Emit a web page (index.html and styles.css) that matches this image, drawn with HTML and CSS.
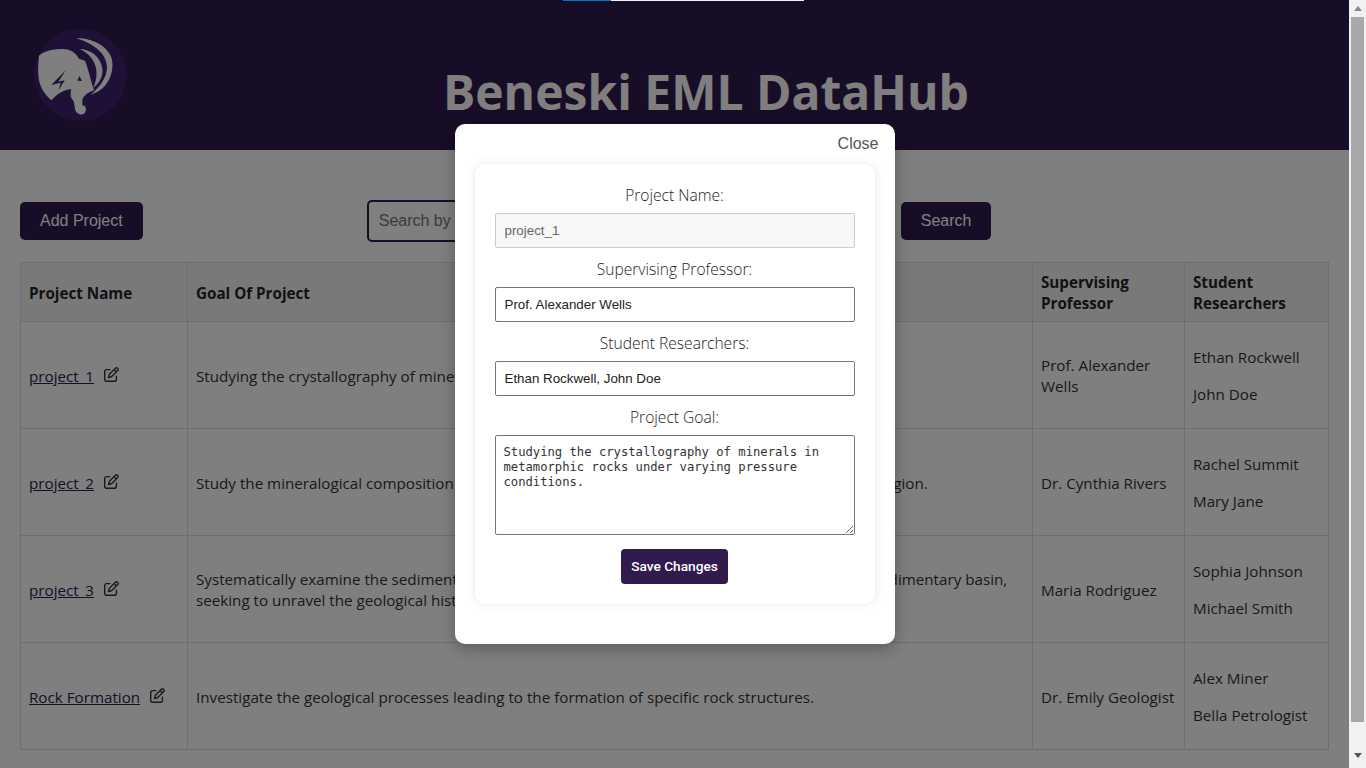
FILE: index.html
```html
<!DOCTYPE html>
<html lang="en">
<head>
    <meta charset="UTF-8">
    <meta name="viewport" content="width=device-width, initial-scale=1.0">
    <title>Beneski EML DataHub</title>
    <link rel="stylesheet" href="styles.css">
</head>
<body>
    <svg class="icon-defs" aria-hidden="true">
        <symbol id="icon-edit" viewBox="0 0 512 512">
            <path d="M441 58.9L453.1 71c9.4 9.4 9.4 24.6 0 33.9L424 134.1 377.9 88 407 58.9c9.4-9.4 24.6-9.4 33.9 0zM209.8 256.2L344 121.9 390.1 168 255.8 302.2c-2.9 2.9-6.5 5-10.4 6.1l-58.5 16.7 16.7-58.5c1.1-3.9 3.2-7.5 6.1-10.4zM373.1 25L175.8 222.2c-8.7 8.7-15 19.4-18.3 31.1l-28.6 100c-2.4 8.4-.1 17.4 6.1 23.6s15.2 8.5 23.6 6.1l100-28.6c11.8-3.4 22.5-9.7 31.1-18.3L487 138.9c28.1-28.1 28.1-73.7 0-101.8L474.9 25C446.8-3.1 401.2-3.1 373.1 25zM88 64C39.4 64 0 103.4 0 152V424c0 48.6 39.4 88 88 88H360c48.6 0 88-39.4 88-88V312c0-13.3-10.7-24-24-24s-24 10.7-24 24V424c0 22.1-17.9 40-40 40H88c-22.1 0-40-17.9-40-40V152c0-22.1 17.9-40 40-40H200c13.3 0 24-10.7 24-24s-10.7-24-24-24H88z"/>
        </symbol>
    </svg>

    <div class="window">
        <div class="page">
            <header class="site-header">
                <svg class="logo" viewBox="12 12 276 276" aria-label="Beneski logo">
                    <circle cx="151" cy="150" r="138" fill="#3e2070"/>
                    <path fill="#fff" d="M27 92C45 76 75 72 100 72C122 73 138 84 147 101L165 107C174 128 182 165 192 196C172 204 160 212 157 226L157 241C168 242 171 252 165 263C156 273 141 269 136 256C132 242 135 232 126 222C120 214 122 202 124 192C104 194 82 204 65 226C42 208 26 180 25 150C24 130 25 110 27 92Z"/>
                    <path fill="#3e2070" d="M107 136L64 180L92 173L86 196L104 166L85 170Z"/>
                    <path fill="#3e2070" d="M148 153L156 168L142 167Z"/>
                    <path fill="#fff" d="M138 40C185 38 232 62 245 100C256 148 228 198 182 209C205 190 231 160 231 125C229 85 190 55 138 40Z"/>
                    <path fill="#fff" d="M148 72C180 72 212 95 217 130C220 155 208 175 188 190C198 172 203 150 197 125C190 100 172 82 148 72Z"/>
                </svg>
                <h1>Beneski EML DataHub</h1>
            </header>

            <main class="content">
                <div class="toolbar">
                    <button class="btn">Add Project</button>
                    <div class="search">
                        <input class="search-input" type="text" placeholder="Search by project name, goal, professor or student">
                        <button class="btn search-btn">Search</button>
                    </div>
                </div>

                <table class="projects">
                    <colgroup>
                        <col class="col-name">
                        <col>
                        <col class="col-prof">
                        <col class="col-students">
                    </colgroup>
                    <thead>
                        <tr>
                            <th>Project Name</th>
                            <th>Goal Of Project</th>
                            <th>Supervising Professor</th>
                            <th>Student Researchers</th>
                        </tr>
                    </thead>
                    <tbody>
                        <tr>
                            <td><a href="#">project_1</a><svg class="edit"><use href="#icon-edit"/></svg></td>
                            <td>Studying the crystallography of minerals in metamorphic rocks under varying pressure conditions.</td>
                            <td>Prof. Alexander Wells</td>
                            <td><p>Ethan Rockwell</p><p>John Doe</p></td>
                        </tr>
                        <tr>
                            <td><a href="#">project_2</a><svg class="edit"><use href="#icon-edit"/></svg></td>
                            <td>Study the mineralogical composition of igneous rock found within the volcanic formations of the region.</td>
                            <td>Dr. Cynthia Rivers</td>
                            <td><p>Rachel Summit</p><p>Mary Jane</p></td>
                        </tr>
                        <tr>
                            <td><a href="#">project_3</a><svg class="edit"><use href="#icon-edit"/></svg></td>
                            <td>Systematically examine the sedimentary deposits and fossil records preserved within the entire sedimentary basin,<br>seeking to unravel the geological history of the region.</td>
                            <td>Maria Rodriguez</td>
                            <td><p>Sophia Johnson</p><p>Michael Smith</p></td>
                        </tr>
                        <tr>
                            <td><a href="#">Rock Formation</a><svg class="edit"><use href="#icon-edit"/></svg></td>
                            <td>Investigate the geological processes leading to the formation of specific rock structures.</td>
                            <td>Dr. Emily Geologist</td>
                            <td><p>Alex Miner</p><p>Bella Petrologist</p></td>
                        </tr>
                    </tbody>
                </table>
            </main>

            <div class="overlay">
                <div class="modal">
                    <div class="modal-top"><span class="close">Close</span></div>
                    <form class="modal-card">
                        <label>Project Name:</label>
                        <input class="field" type="text" value="project_1" disabled>
                        <label>Supervising Professor:</label>
                        <input class="field" type="text" value="Prof. Alexander Wells">
                        <label>Student Researchers:</label>
                        <input class="field" type="text" value="Ethan Rockwell, John Doe">
                        <label>Project Goal:</label>
                        <textarea class="field goal">Studying the crystallography of minerals in metamorphic rocks under varying pressure conditions.</textarea>
                        <button class="save" type="button">Save Changes</button>
                    </form>
                </div>
            </div>

            <div class="load-bar"><span class="load-done"></span></div>
        </div>

        <div class="scrollbar">
            <span class="arrow arrow-up"></span>
            <span class="thumb"></span>
            <span class="arrow arrow-down"></span>
        </div>
    </div>
</body>
</html>
```

FILE: styles.css
```css
* {
    box-sizing: border-box;
}
html, body {
    margin: 0;
    height: 100%;
    overflow: hidden;
}
body {
    font-family: "Open Sans", "Noto Sans", sans-serif;
    font-size: 15.2px;
    line-height: 21px;
    color: #333;
    background: #fff;
}
.icon-defs {
    display: none;
}
.window {
    display: flex;
    height: 768px;
}
.page {
    position: relative;
    flex: 1;
    min-width: 0;
    overflow: hidden;
}

/* header */
.site-header {
    display: flex;
    align-items: center;
    height: 150px;
    padding: 0 63px 0 34px;
    background: #311a4d;
}
.logo {
    width: 92px;
    height: 92px;
    flex: none;
}
.site-header h1 {
    flex: 1;
    margin: 34px 0 0;
    text-align: center;
    color: #fff;
    font-size: 48px;
    line-height: 64px;
    font-weight: 700;
}

/* toolbar */
.content {
    padding: 50px 20px 0;
}
.toolbar {
    display: flex;
    align-items: center;
    height: 42px;
}
.btn {
    height: 38px;
    padding: 0 20px;
    font-family: "Liberation Sans", Arial, sans-serif;
    font-size: 16px;
    color: #fff;
    background: #311a4d;
    border: none;
    border-radius: 5px;
}
.search {
    display: flex;
    align-items: center;
    gap: 10px;
    margin-left: 224px;
}
.search-input {
    width: 524px;
    height: 42px;
    padding: 0 10px;
    font-family: "Liberation Sans", Arial, sans-serif;
    font-size: 16px;
    border: 2px solid #311a4d;
    border-radius: 5px;
}

/* table */
.projects {
    width: 1309px;
    margin-top: 20px;
    border-collapse: collapse;
    table-layout: fixed;
}
.col-name {
    width: 167px;
}
.col-prof {
    width: 152px;
}
.col-students {
    width: 144px;
}
.projects th, .projects td {
    padding: 9px 8px 7px;
    border: 1px solid #ddd;
    text-align: left;
}
.projects th {
    background: #f2f2f2;
    font-weight: 700;
    color: #212529;
}
.projects td p {
    margin: 16px 0;
}
.projects a {
    color: #311a4d;
}
.edit {
    width: 15px;
    height: 15px;
    margin-left: 10px;
    fill: #333;
}

/* modal */
.overlay {
    position: absolute;
    inset: 0;
    display: flex;
    align-items: center;
    justify-content: center;
    background: rgba(0, 0, 0, 0.5);
}
.modal {
    width: 440px;
    height: 520px;
    padding: 0 20px;
    background: #fff;
    border-radius: 10px;
    box-shadow: 0 4px 16px rgba(0, 0, 0, 0.3);
}
.modal-top {
    display: flex;
    justify-content: flex-end;
    height: 40px;
    padding: 10px 0 0;
    line-height: 19px;
}
.close {
    margin-right: -4px;
    font-family: "Liberation Sans", Arial, sans-serif;
    font-size: 16px;
    color: #555;
}
.modal-card {
    display: flex;
    flex-direction: column;
    align-items: center;
    height: 440px;
    padding: 21px 20px 0;
    border-radius: 10px;
    box-shadow: 0 0 10px rgba(0, 0, 0, 0.1);
}
.modal-card label {
    height: 21px;
    margin-bottom: 7px;
    font-size: 15.6px;
    font-weight: 300;
    color: #222;
}
.field {
    width: 360px;
    height: 35px;
    flex: none;
    margin-bottom: 11px;
    padding: 0 9px;
    font-family: "Liberation Sans", Arial, sans-serif;
    font-size: 13.33px;
    color: #222;
    background: #fff;
    border: 1px solid #767676;
    border-radius: 2px;
}
.field:disabled {
    color: #666;
    background: #f7f7f7;
    border-color: #ccc;
}
.goal {
    height: 100px;
    margin-bottom: 14px;
    padding: 9px 8px;
    font-family: "DejaVu Sans Mono", monospace;
    font-size: 12.2px;
    line-height: 15px;
    color: #333;
}
.save {
    width: 107px;
    height: 35px;
    padding: 0 0 2px;
    font-family: Roboto, sans-serif;
    font-size: 13.7px;
    font-weight: 500;
    color: #fff;
    background: #311a4d;
    border: none;
    border-radius: 4px;
}

/* thin bar at the very top, above the dimming */
.load-bar {
    position: absolute;
    top: 0;
    left: 563px;
    width: 241px;
    height: 1px;
    background: #f0f0f0;
}
.load-done {
    display: block;
    width: 48px;
    height: 100%;
    background: #0078d4;
}

/* scrollbar */
.scrollbar {
    display: flex;
    flex-direction: column;
    align-items: center;
    flex: none;
    width: 17px;
    background: #f1f1f1;
}
.thumb {
    width: 13px;
    height: 705px;
    background: #a8a8a8;
}
.arrow {
    flex: none;
    width: 0;
    height: 0;
    border-left: 4px solid transparent;
    border-right: 4px solid transparent;
}
.arrow-up {
    margin: 6px 0 6px;
    border-bottom: 5px solid #888;
}
.arrow-down {
    margin-top: 31px;
    border-top: 5px solid #555;
}
```
